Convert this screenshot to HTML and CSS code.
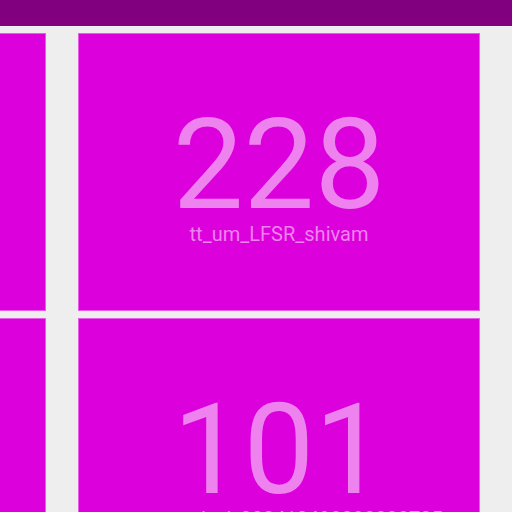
FILE: index.html
```html
<!DOCTYPE html>
<html>
<head>
<meta charset="utf-8">
<link rel="stylesheet" href="styles.css">
</head>
<body>
<header class="topbar"></header>
<main class="grid">
  <div class="tile"><div class="count">312</div><div class="label">tt_um_counter</div></div>
  <div class="tile"><div class="count">228</div><div class="label">tt_um_LFSR_shivam</div></div>
  <div class="tile"><div class="count">97</div><div class="label">tt_um_factory_test</div></div>
  <div class="tile"><div class="count">154</div><div class="label">tt_um_vga_clock</div></div>
  <div class="tile"><div class="count">101</div><div class="label">tt_um_wokwi_380410498092232705</div></div>
  <div class="tile"><div class="count">88</div><div class="label">tt_um_chip_rom</div></div>
</main>
</body>
</html>
```
FILE: styles.css
```css
html, body {
  margin: 0;
  padding: 0;
  background: #eeeeee;
  overflow: hidden;
  width: 512px;
  height: 512px;
}
.topbar {
  height: 26px;
  background: #800080;
  border-bottom: 1px solid #f6f0f6;
}
.grid {
  display: grid;
  grid-template-columns: 402px 402px 402px;
  grid-auto-rows: 278px;
  column-gap: 32px;
  row-gap: 7px;
  margin-top: 6px;
  margin-left: -356px;
}
.tile {
  box-sizing: border-box;
  background: #dc00dc;
  border: 1px solid #e85ae8;
  display: flex;
  flex-direction: column;
  align-items: center;
  padding-top: 68px;
  font-family: Roboto, "Liberation Sans", sans-serif;
  color: #ee82ee;
  overflow: hidden;
}
.count {
  font-size: 126px;
  line-height: 1;
}
.label {
  font-size: 20px;
  line-height: 1;
  margin-top: -4px;
  white-space: nowrap;
}
```
